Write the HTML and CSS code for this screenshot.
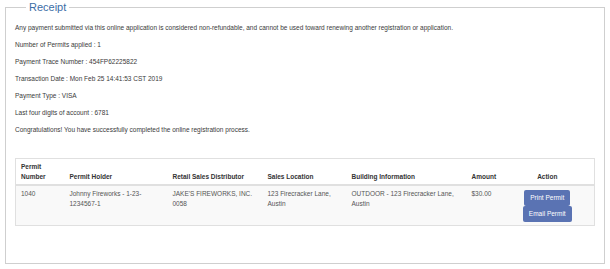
FILE: index.html
```html
<!DOCTYPE html>
<html lang="en">
<head>
    <meta charset="UTF-8">
    <meta name="viewport" content="width=device-width, initial-scale=1.0">
    <title>Receipt</title>
    <link rel="stylesheet" href="styles.css">
</head>
<body>
    <fieldset class="receipt">
        <legend class="receipt-title">Receipt</legend>

        <div class="receipt-info">
            <p>Any payment submitted via this online application is considered non-refundable, and cannot be used toward renewing another registration or application.</p>
            <p>Number of Permits applied : 1</p>
            <p>Payment Trace Number : 454FP62225822</p>
            <p>Transaction Date : Mon Feb 25 14:41:53 CST 2019</p>
            <p>Payment Type : VISA</p>
            <p>Last four digits of account : 6781</p>
            <p>Congratulations! You have successfully completed the online registration process.</p>
        </div>

        <table class="permit-table">
            <thead>
                <tr>
                    <th class="col-number">Permit<br>Number</th>
                    <th class="col-holder">Permit Holder</th>
                    <th class="col-distributor">Retail Sales Distributor</th>
                    <th class="col-location">Sales Location</th>
                    <th class="col-building">Building Information</th>
                    <th class="col-amount">Amount</th>
                    <th class="col-action">Action</th>
                </tr>
            </thead>
            <tbody>
                <tr>
                    <td>1040</td>
                    <td>Johnny Fireworks - 1-23-<br>1234567-1</td>
                    <td>JAKE'S FIREWORKS, INC.<br>0058</td>
                    <td>123 Firecracker Lane,<br>Austin</td>
                    <td>OUTDOOR - 123 Firecracker Lane,<br>Austin</td>
                    <td>$30.00</td>
                    <td class="col-action">
                        <button class="btn">Print Permit</button>
                        <button class="btn">Email Permit</button>
                    </td>
                </tr>
            </tbody>
        </table>
    </fieldset>
</body>
</html>
```

FILE: styles.css
```css
:root {
    --border: #cfcfcf;
    --table-border: #e0e0e0;
    --title: #3b6da6;
    --button: #5a73b3;
    --text: #3a3a3a;
}

* {
    box-sizing: border-box;
}

body {
    margin: 0;
    padding: 0 5px;
    background: #ffffff;
    font-family: 'Liberation Sans', Arial, sans-serif;
    color: var(--text);
}

.receipt {
    margin: 0;
    padding: 9px 9px 38px;
    border: 1px solid var(--border);
    min-width: 0;
    height: 264px;
}

.receipt-title {
    margin-left: 11px;
    padding: 0 3px;
    font-size: 11px;
    line-height: 14px;
    color: var(--title);
}

.receipt-info {
    font-size: 6.5px;
    line-height: 10px;
}

.receipt-info p {
    margin: 0 0 7px;
}

.permit-table {
    width: 100%;
    margin-top: 23px;
    border-collapse: collapse;
    border: 1px solid var(--table-border);
    font-size: 6.5px;
    line-height: 10px;
    table-layout: fixed;
}

.permit-table th {
    padding: 3px 5px 2px;
    text-align: left;
    vertical-align: bottom;
    font-weight: bold;
    color: #333333;
    border-bottom: 2px solid var(--table-border);
}

.permit-table td {
    padding: 3px 5px;
    vertical-align: top;
    background: #f9f9f9;
    color: #555555;
}

.col-number { width: 49px; }
.col-holder { width: 103px; }
.col-distributor { width: 95px; }
.col-location { width: 84px; }
.col-building { width: 120px; }
.col-amount { width: 34px; }

.permit-table .col-action {
    text-align: center;
}

.permit-table td.col-action {
    padding-top: 4px;
}

.btn {
    display: block;
    margin: 0 auto;
    padding: 3px 6px;
    border: none;
    border-radius: 2px;
    background: var(--button);
    color: #ffffff;
    font-family: inherit;
    font-size: 6.5px;
    line-height: 10px;
}
```
